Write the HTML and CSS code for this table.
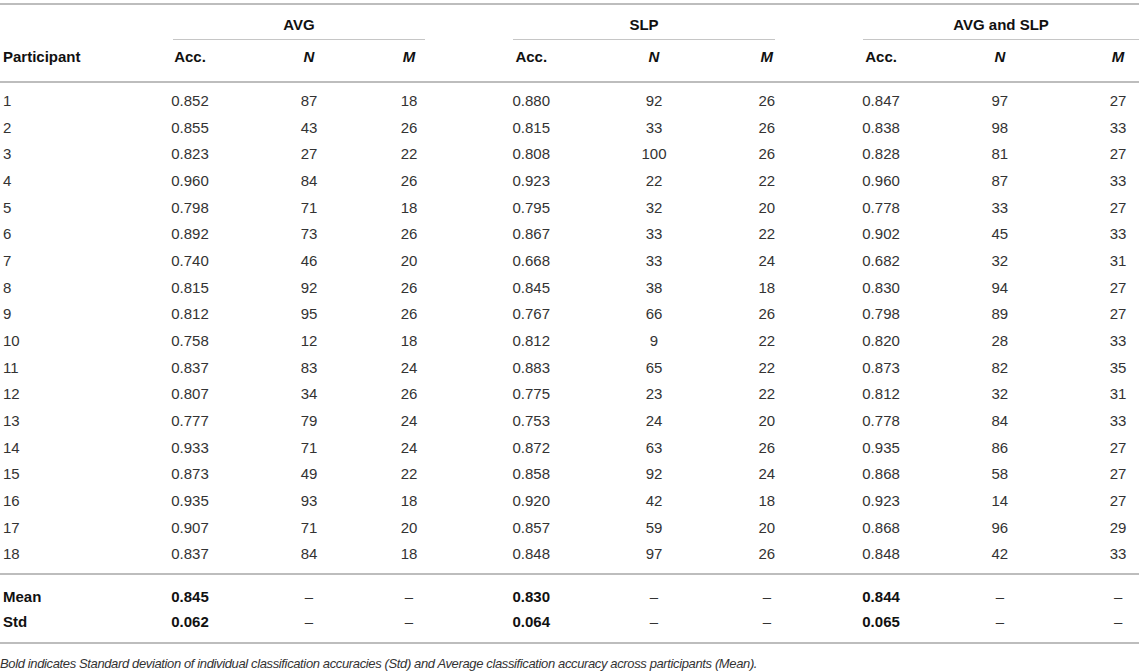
FILE: index.html
```html
<!DOCTYPE html>
<html>
<head>
    <title>Classification accuracy per participant</title>
    <meta http-equiv="content-type" content="text/html; charset=UTF-8"/>
    <link rel="stylesheet" href="styles.css">
</head>
<body>
    <table class="results">
        <colgroup>
            <col class="w-part"/>
            <col class="w-acc1"/><col class="w-n1"/><col class="w-m1"/>
            <col class="w-acc2"/><col class="w-n2"/><col class="w-m2"/>
            <col class="w-acc3"/><col class="w-n3"/><col class="w-m3"/>
        </colgroup>
        <thead>
            <tr class="groups">
                <th rowspan="2" class="participant">Participant</th>
                <th colspan="3" class="group group-avg"><span>AVG</span></th>
                <th colspan="3" class="group group-slp"><span>SLP</span></th>
                <th colspan="3" class="group group-both"><span>AVG and SLP</span></th>
            </tr>
            <tr class="sub">
                <th>Acc.</th><th><i>N</i></th><th><i>M</i></th>
                <th>Acc.</th><th><i>N</i></th><th><i>M</i></th>
                <th>Acc.</th><th><i>N</i></th><th><i>M</i></th>
            </tr>
        </thead>
        <tbody class="data">
            <tr><td>1</td><td>0.852</td><td>87</td><td>18</td><td>0.880</td><td>92</td><td>26</td><td>0.847</td><td>97</td><td>27</td></tr>
            <tr><td>2</td><td>0.855</td><td>43</td><td>26</td><td>0.815</td><td>33</td><td>26</td><td>0.838</td><td>98</td><td>33</td></tr>
            <tr><td>3</td><td>0.823</td><td>27</td><td>22</td><td>0.808</td><td>100</td><td>26</td><td>0.828</td><td>81</td><td>27</td></tr>
            <tr><td>4</td><td>0.960</td><td>84</td><td>26</td><td>0.923</td><td>22</td><td>22</td><td>0.960</td><td>87</td><td>33</td></tr>
            <tr><td>5</td><td>0.798</td><td>71</td><td>18</td><td>0.795</td><td>32</td><td>20</td><td>0.778</td><td>33</td><td>27</td></tr>
            <tr><td>6</td><td>0.892</td><td>73</td><td>26</td><td>0.867</td><td>33</td><td>22</td><td>0.902</td><td>45</td><td>33</td></tr>
            <tr><td>7</td><td>0.740</td><td>46</td><td>20</td><td>0.668</td><td>33</td><td>24</td><td>0.682</td><td>32</td><td>31</td></tr>
            <tr><td>8</td><td>0.815</td><td>92</td><td>26</td><td>0.845</td><td>38</td><td>18</td><td>0.830</td><td>94</td><td>27</td></tr>
            <tr><td>9</td><td>0.812</td><td>95</td><td>26</td><td>0.767</td><td>66</td><td>26</td><td>0.798</td><td>89</td><td>27</td></tr>
            <tr><td>10</td><td>0.758</td><td>12</td><td>18</td><td>0.812</td><td>9</td><td>22</td><td>0.820</td><td>28</td><td>33</td></tr>
            <tr><td>11</td><td>0.837</td><td>83</td><td>24</td><td>0.883</td><td>65</td><td>22</td><td>0.873</td><td>82</td><td>35</td></tr>
            <tr><td>12</td><td>0.807</td><td>34</td><td>26</td><td>0.775</td><td>23</td><td>22</td><td>0.812</td><td>32</td><td>31</td></tr>
            <tr><td>13</td><td>0.777</td><td>79</td><td>24</td><td>0.753</td><td>24</td><td>20</td><td>0.778</td><td>84</td><td>33</td></tr>
            <tr><td>14</td><td>0.933</td><td>71</td><td>24</td><td>0.872</td><td>63</td><td>26</td><td>0.935</td><td>86</td><td>27</td></tr>
            <tr><td>15</td><td>0.873</td><td>49</td><td>22</td><td>0.858</td><td>92</td><td>24</td><td>0.868</td><td>58</td><td>27</td></tr>
            <tr><td>16</td><td>0.935</td><td>93</td><td>18</td><td>0.920</td><td>42</td><td>18</td><td>0.923</td><td>14</td><td>27</td></tr>
            <tr><td>17</td><td>0.907</td><td>71</td><td>20</td><td>0.857</td><td>59</td><td>20</td><td>0.868</td><td>96</td><td>29</td></tr>
            <tr><td>18</td><td>0.837</td><td>84</td><td>18</td><td>0.848</td><td>97</td><td>26</td><td>0.848</td><td>42</td><td>33</td></tr>
        </tbody>
        <tbody class="summary">
            <tr><td><b>Mean</b></td><td><b>0.845</b></td><td>&ndash;</td><td>&ndash;</td><td><b>0.830</b></td><td>&ndash;</td><td>&ndash;</td><td><b>0.844</b></td><td>&ndash;</td><td>&ndash;</td></tr>
            <tr><td><b>Std</b></td><td><b>0.062</b></td><td>&ndash;</td><td>&ndash;</td><td><b>0.064</b></td><td>&ndash;</td><td>&ndash;</td><td><b>0.065</b></td><td>&ndash;</td><td>&ndash;</td></tr>
        </tbody>
    </table>
    <p class="footnote">Bold indicates Standard deviation of individual classification accuracies (Std) and Average classification accuracy across participants (Mean).</p>
</body>
</html>
```

FILE: styles.css
```css
body {
    margin: 0;
    background-color: #fff;
    color: #333;
    font-family: "Liberation Sans", Arial, sans-serif;
    font-size: 15px;
}

.results {
    table-layout: fixed;
    width: 1139px;
    margin-top: 3px;
    border-collapse: collapse;
    border-top: 2px solid #bdbdbd;
    border-bottom: 2px solid #bdbdbd;
}

/* column widths */
.w-part { width: 130.5px; }
.w-acc1 { width: 119px; }
.w-n1   { width: 109.5px; }
.w-m1   { width: 111px; }
.w-acc2 { width: 122.5px; }
.w-n2   { width: 117.5px; }
.w-m2   { width: 113.5px; }
.w-acc3 { width: 117px; }
.w-n3   { width: 118.5px; }
.w-m3   { width: 80px; }

.results th,
.results td {
    padding: 0;
    text-align: center;
    line-height: 18px;
}

.results th {
    color: #111;
    font-weight: bold;
}

.results .participant {
    text-align: left;
    vertical-align: bottom;
    padding: 0 0 15px 3px;
    border-bottom: 2px solid #bdbdbd;
}

.groups .group {
    padding-top: 11px;
}

.group span {
    display: block;
    padding-bottom: 5px;
    border-bottom: 1.5px solid #c6c6c6;
}

.group-avg span  { margin: 0 45px 0 42.5px; }
.group-slp span  { margin: 0 48.5px 0 43px; }
.group-both span { margin: 0 0 0 39.5px; }

.sub th {
    padding-top: 8px;
    padding-bottom: 15px;
    border-bottom: 2px solid #bdbdbd;
}

/* per-column nudges so values sit under their headings */
.sub th:nth-child(2),
.results tbody td:nth-child(3) { padding-left: 9.5px; }
.sub th:nth-child(3),
.results tbody td:nth-child(4) { padding-right: 11px; }
.sub th:nth-child(5),
.results tbody td:nth-child(6) { padding-left: 5.5px; }
.sub th:nth-child(7),
.results tbody td:nth-child(8) { padding-right: 2px; }
.sub th:nth-child(9),
.results tbody td:nth-child(10) { padding-left: 38px; }

.results tbody td:first-child {
    text-align: left;
    padding-left: 3px;
}

.data td {
    line-height: 26.65px;
}

.data tr:first-child td { padding-top: 5px; }
.data tr:last-child td { padding-bottom: 5.5px; }

.summary tr:first-child td {
    border-top: 2px solid #bdbdbd;
}

.summary td {
    line-height: 25px;
}

.summary tr:first-child td { padding-top: 8.5px; }
.summary tr:last-child td { padding-bottom: 8.5px; }

.summary b {
    color: #111;
}

.footnote {
    margin: 11px 0 0 0;
    font-size: 13px;
    font-style: italic;
    letter-spacing: -0.37px;
    line-height: 18px;
}
```
